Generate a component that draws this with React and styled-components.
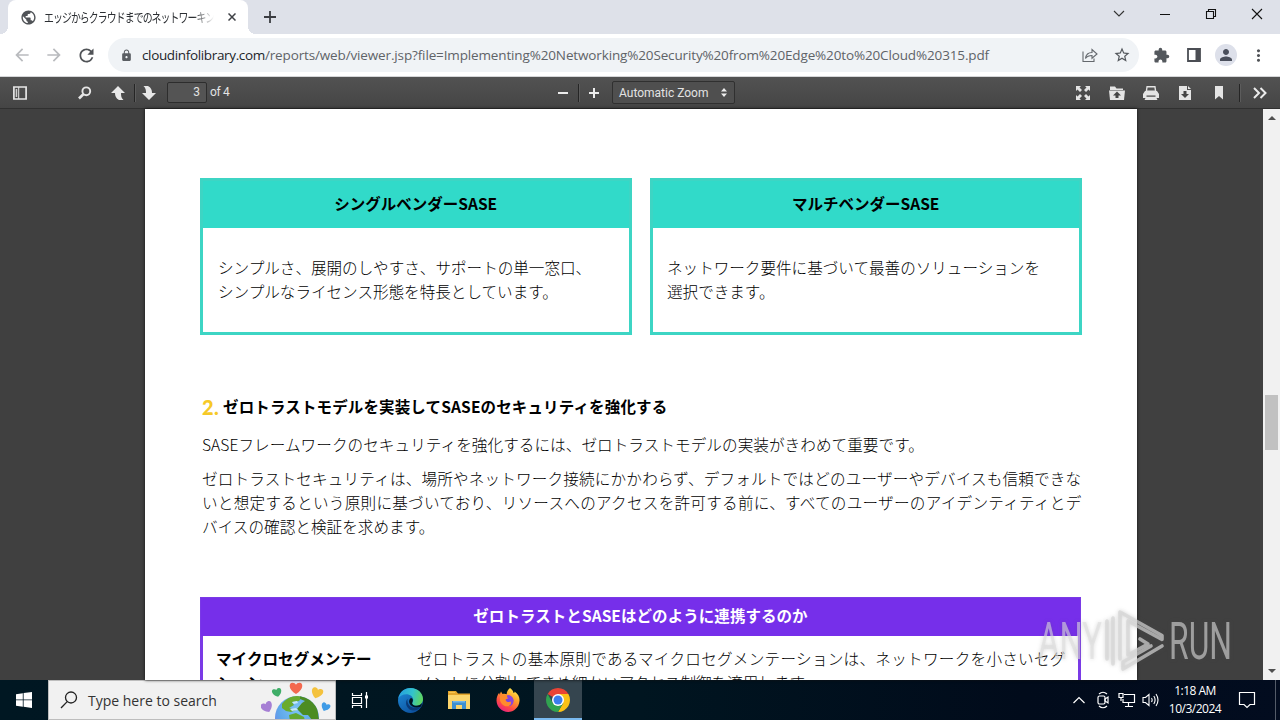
import styled, { createGlobalStyle } from "styled-components";
import {
  MdArrowBack,
  MdArrowForward,
  MdExtension,
  MdLock,
  MdMoreVert,
  MdPerson,
  MdPublic,
  MdRefresh,
  MdStarBorder,
} from "react-icons/md";

const GlobalStyle = createGlobalStyle`
  * {
    box-sizing: border-box;
  }

  body {
    margin: 0;
    overflow: hidden;
    font-family: "Open Sans", "Noto Sans CJK JP", sans-serif;
  }

  svg {
    display: block;
    flex: none;
  }
`;

const cards = [
  {
    title: "シングルベンダーSASE",
    inset: 15,
    lines: [
      "シンプルさ、展開のしやすさ、サポートの単一窓口、",
      "シンプルなライセンス形態を特長としています。",
    ],
  },
  {
    title: "マルチベンダーSASE",
    inset: 14,
    lines: ["ネットワーク要件に基づいて最善のソリューションを", "選択できます。"],
  },
];

const paragraph = [
  {
    text: "ゼロトラストセキュリティは、場所やネットワーク接続にかかわらず、デフォルトではどのユーザーやデバイスも信頼できな",
    track: 0.17,
  },
  {
    text: "いと想定するという原則に基づいており、リソースへのアクセスを許可する前に、すべてのユーザーのアイデンティティとデ",
    track: 0.26,
  },
  { text: "バイスの確認と検証を求めます。", track: 0.03 },
];

const App = () => {
  return (
    <Screen>
      <GlobalStyle />
      <TabStrip>
        <Tab>
          <MdPublic size={17} color="#505357" />
          <TabTitle>
            <span>エッジからクラウドまでのネットワーキン</span>
          </TabTitle>
          <CloseIcon />
        </Tab>
        <NewTab>
          <svg width="12" height="12" viewBox="0 0 12 12">
            <path d="M6 0v12M0 6h12" stroke="#3b3d42" strokeWidth="1.8" />
          </svg>
        </NewTab>
        <WindowControls>
          <svg width="12" height="12" viewBox="0 0 12 12">
            <path d="M1 3l5 5 5-5" fill="none" stroke="#333" strokeWidth="1.1" />
          </svg>
          <svg width="12" height="12" viewBox="0 0 12 12">
            <path d="M1 6.5h10" stroke="#111" />
          </svg>
          <svg width="12" height="12" viewBox="0 0 12 12">
            <path
              d="M1.5 3.5h7v7h-7zM3.5 3.5v-2h7v7h-2"
              fill="none"
              stroke="#111"
              strokeWidth="1.1"
            />
          </svg>
          <svg width="12" height="12" viewBox="0 0 12 12">
            <path d="M1 1l10 10M11 1L1 11" stroke="#111" strokeWidth="1.1" />
          </svg>
        </WindowControls>
      </TabStrip>

      <AddressBar>
        <NavButtons>
          <MdArrowBack size={20} color="#b9bbbe" />
          <MdArrowForward size={20} color="#b9bbbe" />
          <MdRefresh size={21} color="#505357" />
        </NavButtons>
        <Omnibox>
          <MdLock size={13} color="#5a5e63" />
          <Url>
            <Domain>cloudinfolibrary.com</Domain>
            <Path>
              /reports/web/viewer.jsp?file=Implementing%20Networking%20Security%20from%20Edge%20to%20Cloud%20315.pdf
            </Path>
          </Url>
          <OmniboxActions>
            <ShareIcon />
            <MdStarBorder size={18} color="#54585d" />
          </OmniboxActions>
        </Omnibox>
        <ProfileActions>
          <MdExtension size={17} color="#54585d" />
          <svg width="14" height="14" viewBox="0 0 14 14">
            <path d="M1 1h12v12H1z" fill="none" stroke="#4b4e54" strokeWidth="1.8" />
            <path d="M8.5 1H13v12H8.5z" fill="#4b4e54" />
          </svg>
          <Avatar>
            <MdPerson size={18} color="#4a4f5c" />
          </Avatar>
          <MdMoreVert size={19} color="#505357" />
        </ProfileActions>
      </AddressBar>

      <PdfToolbar>
        <ToolGroup>
          <SidebarIcon />
          <FindGap />
          <FindIcon />
          <PageArrow $gap={17} />
          <Divider $gap={8} />
          <PageArrow $down $gap={6} />
          <PageInput>3</PageInput>
          <PageCount>of 4</PageCount>
        </ToolGroup>
        <ToolGroup>
          <svg width="16" height="16" viewBox="0 0 16 16">
            <path d="M3 8h10" stroke="#ececec" strokeWidth="2" />
          </svg>
          <Divider $gap={7} />
          <ZoomInIcon />
          <ZoomSelect>
            <span>Automatic Zoom</span>
            <svg width="6" height="9" viewBox="0 0 6 9">
              <path d="M0 3.4L3 0l3 3.4zM0 5.6h6L3 9z" fill="#eee" />
            </svg>
          </ZoomSelect>
        </ToolGroup>
        <DocumentTools>
          <FullscreenIcon />
          <OpenIcon />
          <PrintIcon />
          <DownloadIcon />
          <BookmarkIcon />
          <Divider $gap={4} />
          <MoreIcon />
        </DocumentTools>
      </PdfToolbar>

      <Viewer>
        <Page>
          <CardRow>
            {cards.map((card) => (
              <Card key={card.title}>
                <CardTitle>{card.title}</CardTitle>
                <CardBody $inset={card.inset}>
                  {card.lines.map((line) => (
                    <Line key={line} $track={-0.02}>
                      {line}
                    </Line>
                  ))}
                </CardBody>
              </Card>
            ))}
          </CardRow>
          <Heading>
            <HeadingNumber>2.</HeadingNumber>
            <HeadingText>ゼロトラストモデルを実装してSASEのセキュリティを強化する</HeadingText>
          </Heading>
          <Prose>
            <Line $track={0.06}>
              SASEフレームワークのセキュリティを強化するには、ゼロトラストモデルの実装がきわめて重要です。
            </Line>
          </Prose>
          <Prose $gap={10}>
            {paragraph.map((line) => (
              <Line key={line.text} $track={line.track}>
                {line.text}
              </Line>
            ))}
          </Prose>
          <Table>
            <TableTitle>ゼロトラストとSASEはどのように連携するのか</TableTitle>
            <TableRow>
              <TableTerm>
                マイクロセグメンテー
                <br />
                ション
              </TableTerm>
              <div>
                <Line $track={0.27}>
                  ゼロトラストの基本原則であるマイクロセグメンテーションは、ネットワークを小さいセグ
                </Line>
                <Line>メントに分割してきめ細かいアクセス制御を適用します。</Line>
              </div>
            </TableRow>
          </Table>
        </Page>
        <Scrollbar>
          <ScrollArrow $up />
          <ScrollThumb />
          <ScrollArrow />
        </Scrollbar>
        <Watermark />
      </Viewer>

      <Taskbar>
        <StartButton>
          <svg width="16" height="16" viewBox="0 0 16 16">
            <path
              d="M0 2.2L6.8 1.2v6.3H0zM7.6 1.1L16 0v7.5H7.6zM0 8.3h6.8v6.4L0 13.8zM7.6 8.3H16V16l-8.4-1.2z"
              fill="#fff"
            />
          </svg>
        </StartButton>
        <SearchBox>
          <svg width="18" height="18" viewBox="0 0 18 18">
            <circle cx="11" cy="6.5" r="5.5" fill="none" stroke="#222" strokeWidth="1.3" />
            <path d="M7.2 10.6L1 17" stroke="#222" strokeWidth="1.3" />
          </svg>
          <SearchText>Type here to search</SearchText>
          <EarthArt />
        </SearchBox>
        <TaskButton>
          <TaskViewIcon />
        </TaskButton>
        <TaskButton $gap={2}>
          <EdgeIcon />
        </TaskButton>
        <TaskButton $gap={1}>
          <FolderIcon />
        </TaskButton>
        <TaskButton $gap={1}>
          <FirefoxIcon />
        </TaskButton>
        <TaskButton $active $gap={2}>
          <ChromeIcon />
        </TaskButton>
        <Tray>
          <TrayIcon>
            <svg width="14" height="14" viewBox="0 0 14 14">
              <path d="M1.5 10L7 4.5l5.5 5.5" fill="none" stroke="#fff" strokeWidth="1.2" />
            </svg>
          </TrayIcon>
          <TrayIcon>
            <MeetIcon />
          </TrayIcon>
          <TrayIcon>
            <NetworkIcon />
          </TrayIcon>
          <TrayIcon>
            <VolumeIcon />
          </TrayIcon>
          <Clock>
            <span>1:18 AM</span>
            <span>10/3/2024</span>
          </Clock>
          <svg width="18" height="18" viewBox="0 0 18 18">
            <path
              d="M1.5 1.5h15v12H12l-3 3-3-3H1.5z"
              fill="none"
              stroke="#fff"
              strokeWidth="1.2"
            />
          </svg>
          <ShowDesktop />
        </Tray>
      </Taskbar>
    </Screen>
  );
};

export default App;

const CloseIcon = () => (
  <svg width="8" height="8" viewBox="0 0 8 8">
    <path d="M.5.5l7 7M7.5.5l-7 7" stroke="#3f4146" strokeWidth="1.5" />
  </svg>
);

const ShareIcon = () => (
  <svg width="16" height="15" viewBox="0 0 16 15" fill="none" stroke="#64686d" strokeWidth="1.1">
    <path d="M1 3.5v10h11v-3" />
    <path d="M3.5 10.5C4 6.5 6.5 4.5 10 4.5v-3L15 6l-5 4.2V7.5c-3 0-5 .8-6.5 3z" />
  </svg>
);

const SidebarIcon = () => (
  <svg width="16" height="16" viewBox="0 0 16 16">
    <path d="M1.9 2h12.2v12H1.9z" fill="none" stroke="#e6e6e6" strokeWidth="1.7" />
    <path d="M3.7 4h1.5v8H3.7z" fill="#d0d0d0" />
    <path d="M6.7 2v12" stroke="#e6e6e6" />
  </svg>
);

const FindIcon = () => (
  <svg width="16" height="16" viewBox="0 0 16 16" fill="none" stroke="#e6e6e6">
    <circle cx="9.3" cy="6.3" r="3.9" strokeWidth="1.9" />
    <path d="M6.3 9.3L2 13.5" strokeWidth="2.6" />
  </svg>
);

const PageArrow = ({ $down, $gap }) => (
  <ArrowSvg width="16" height="16" viewBox="0 0 16 16" $gap={$gap}>
    <path
      d="M8 1l7 7h-4c0 3 .3 5 2.5 7H9c-3-1.5-4-4-4-7H1z"
      fill="#e8e8e8"
      transform={$down ? "rotate(180 8 8)" : undefined}
    />
  </ArrowSvg>
);

const ZoomInIcon = () => (
  <ArrowSvg width="16" height="16" viewBox="0 0 16 16" $gap={7}>
    <path d="M8 3v10M3 8h10" stroke="#ececec" strokeWidth="2" />
  </ArrowSvg>
);

const FullscreenIcon = () => (
  <svg width="16" height="16" viewBox="0 0 16 16" fill="#e4e4e4">
    <path d="M1 1h5L4.5 2.5 7 5 5 7 2.5 4.5 1 6zM15 1v5l-1.5-1.5L11 7 9 5l2.5-2.5L10 1zM1 15v-5l1.5 1.5L5 9l2 2-2.5 2.5L6 15zM15 15h-5l1.5-1.5L9 11l2-2 2.5 2.5L15 10z" />
  </svg>
);

const OpenIcon = () => (
  <svg width="16" height="16" viewBox="0 0 16 16">
    <path d="M1 1.5h5l1.5 2H14V5H1z" fill="#e4e4e4" />
    <path d="M0 5.5h16L15 15H1z" fill="#e4e4e4" />
    <path d="M8 6.5l4 4H9.5V13h-3v-2.5H4z" fill="#444" />
  </svg>
);

const PrintIcon = () => (
  <svg width="16" height="16" viewBox="0 0 16 16">
    <path d="M3.5 1h9l.8 5H2.7z" fill="#e4e4e4" />
    <path d="M4.6 2.5h6.8l.4 3H4.2z" fill="#555" />
    <path d="M2 6h12l2 3v4h-2.5l1 2H1.5l1-2H0V9z" fill="#e4e4e4" />
    <path d="M3.5 10.5h9v1.2h-9z" fill="#444" />
  </svg>
);

const DownloadIcon = () => (
  <svg width="16" height="16" viewBox="0 0 16 16">
    <path d="M2 1h8v4h4v10H2z" fill="#e4e4e4" />
    <path d="M11 1l3 3h-3z" fill="#e4e4e4" />
    <path d="M6.5 6h3v3H12l-4 4-4-4h2.5z" fill="#444" />
  </svg>
);

const BookmarkIcon = () => (
  <svg width="16" height="16" viewBox="0 0 16 16">
    <path d="M4 1h8v13.5L8 11l-4 3.5z" fill="#e4e4e4" />
  </svg>
);

const MoreIcon = () => (
  <ArrowSvg width="16" height="16" viewBox="0 0 16 16" $gap={12}>
    <path
      d="M2 3l5 5-5 5M8.5 3l5 5-5 5"
      fill="none"
      stroke="#ececec"
      strokeWidth="2"
    />
  </ArrowSvg>
);

const EarthArt = () => (
  <svg width="74" height="38" viewBox="0 0 74 38">
    <defs>
      <radialGradient id="ocean" cx="0.5" cy="0.3" r="0.75">
        <stop offset="0" stopColor="#7cc4f2" />
        <stop offset="0.55" stopColor="#5fa8ea" />
        <stop offset="1" stopColor="#7a74e6" />
      </radialGradient>
      <clipPath id="globe">
        <circle cx="36" cy="37" r="22" />
      </clipPath>
    </defs>
    <circle cx="36" cy="37" r="22" fill="url(#ocean)" />
    <g clipPath="url(#globe)">
      <path d="M21 23c4-5 9-8 15-9l5 2-3 4-7 1 2 3-5 3 7 2-5 2-5-1-4-3z" fill="#6aab2e" />
      <path d="M39 15l9 2 8 8 2 14h-7l-4-5-5 0-6-6 5-6 3-2-5-2z" fill="#4c8c23" />
      <path d="M28 34l7-2 8 4 1 4H29z" fill="#63a830" />
      <path d="M31 21l5-1 1 2-4 1zM29 28l6-1 2 2-6 1z" fill="#c5e9f8" />
    </g>
    <Heart x={35} y={7} size={12} color="#f3694f" />
    <Heart x={16} y={11.5} size={9} color="#3fae68" turn={-14} />
    <Heart x={56} y={12} size={11} color="#f4c23d" turn={18} />
    <Heart x={6} y={26} size={11} color="#a67fd4" turn={-24} />
    <Heart x={64.5} y={26} size={8.5} color="#3f9be6" turn={24} />
  </svg>
);

const Heart = ({ x, y, size, color, turn = 0 }) => (
  <path
    d="M0 4.5C-6 1-5.500-4-2.700-4-1.300-4-.4-3.500 0-2.500.4-3.500 1.300-4 2.700-4 5.500-4 6 1 0 4.500z"
    fill={color}
    transform={`translate(${x} ${y}) rotate(${turn}) scale(${size / 9})`}
  />
);

const TaskViewIcon = () => (
  <svg width="18" height="18" viewBox="0 0 18 18" fill="none" stroke="#fff" strokeWidth="1.2">
    <path d="M1.5 2v2.5h9V2M1.5 6.5h9v6h-9zM1.5 17v-2.5h9V17M15.5 1v16" />
    <path d="M14 4.5h3v3h-3z" fill="#fff" stroke="none" />
  </svg>
);

const EdgeIcon = () => (
  <svg width="25" height="25" viewBox="0 0 24 24">
    <defs>
      <linearGradient id="edgeTop" x1="0" y1="0.3" x2="1" y2="0.5">
        <stop offset="0" stopColor="#259fe0" />
        <stop offset="0.55" stopColor="#33c3cc" />
        <stop offset="1" stopColor="#5fd65c" />
      </linearGradient>
      <linearGradient id="edgeBase" x1="0" y1="0" x2="0.7" y2="1">
        <stop offset="0" stopColor="#1f8fdc" />
        <stop offset="1" stopColor="#0c4f9c" />
      </linearGradient>
    </defs>
    <circle cx="12" cy="12" r="12" fill="url(#edgeBase)" />
    <path
      d="M.3 10C1.5 4 6.2 0 12 0c7 0 12 5 12 10.500 0 4-3 6.500-6.500 6.500-3 0-4-1.400-4-2.300 0-.8 1.100-1.200 1.100-3.200C14.600 8.300 11.500 6 8 6 4.500 6 1.600 7.600.3 10z"
      fill="url(#edgeTop)"
    />
    <path
      d="M9.200 10.200C6.500 13 7.500 19.500 13 21.300c3.500 1 7-.5 9-3.300-2.500 1.500-6 1.600-8.500.5-3.300-1.400-5-4.700-4.300-8.300z"
      fill="#0a3a78"
    />
    <path
      d="M22.200 17.800c-4 2-9.800 1-11.300-3.300-.7-2 .2-4 1.600-4.800 1.800.3 2.300 2 1.400 3.700-1 1.900.6 3.600 3.600 3.600 2.500 0 4.500-1 5.600-2.500z"
      fill="#00141f"
    />
  </svg>
);

const FolderIcon = () => (
  <svg width="22" height="20" viewBox="0 0 22 20">
    <path d="M0 1h8l2 2.5h12V19H0z" fill="#e3a52c" />
    <path d="M0 5h22v14H0z" fill="#fbd56c" />
    <path d="M1 2h6v1H1z" fill="#f7c44e" />
    <path d="M4 19v-8h14v8h-4v-4H8v4z" fill="#3e8fd0" />
    <path d="M5 11h12v1.5H5z" fill="#71b5e8" />
  </svg>
);

const FirefoxIcon = () => (
  <svg width="24" height="24" viewBox="0 0 24 24">
    <defs>
      <linearGradient id="fox" x1="0.8" y1="0" x2="0.2" y2="1">
        <stop offset="0" stopColor="#fff14f" />
        <stop offset="0.35" stopColor="#ffa42b" />
        <stop offset="0.7" stopColor="#ff4a43" />
        <stop offset="1" stopColor="#e31b8b" />
      </linearGradient>
    </defs>
    <path
      d="M14 0c2.300 1.500 3.300 3.500 3.600 5.100.8-.1 1-.8 1-1.600C22.500 6 23.800 9.800 23.500 13 23 19.300 18 24 12 24S.6 19 .5 12.600C.5 9.300 1.600 6.700 3.200 4.800l.4 2L5 3.500 6.500 6c1.800-.6 3-.3 4.200.2C10.600 4 12 1.500 14 0z"
      fill="url(#fox)"
    />
    <circle cx="12.2" cy="12.8" r="5.300" fill="#7a42e0" />
    <path
      d="M4 8c2-1.500 5-1.600 7.500.2l1.600 1c-.5 1.500-2.600 1.300-3.500 2.600.3 2.500 4 3 5.800 1.200 1.200 2.300-1 5.300-4.400 5.300C7 18.300 4.500 15 4 12z"
      fill="#ff8b2c"
    />
    <path
      d="M11 7.500c3-.8 6 1.500 6.300 4.800.3 3-1.300 5-3.500 5.800 1.800-2.300 1.400-4.500.2-6C12.500 10.500 11 10.500 11 7.500z"
      fill="#8b45dc"
    />
  </svg>
);

const ChromeIcon = () => (
  <svg width="24" height="24" viewBox="0 0 24 24">
    <path d="M12 12L1.610 6A12 12 0 0 1 22.390 6z" fill="#ea4335" />
    <path d="M12 6h10.390A12 12 0 0 1 12 24l5.200-9z" fill="#fbc116" />
    <path d="M1.610 6A12 12 0 0 0 12 24l5.200-9H6.800z" fill="#31a350" />
    <circle cx="12" cy="12" r="6" fill="#fff" />
    <circle cx="12" cy="12" r="4.5" fill="#3b7ded" />
  </svg>
);

const MeetIcon = () => (
  <svg width="14" height="18" viewBox="0 0 14 18" fill="none" stroke="#fff" strokeWidth="1.2">
    <path d="M3 3Q7-.5 11 3M3 15q4 3.5 8 0" />
    <rect x="2" y="5" width="7" height="8" rx="1.5" />
    <path d="M9 8l3-2v6L9 10z" />
  </svg>
);

const NetworkIcon = () => (
  <svg width="18" height="16" viewBox="0 0 18 16" fill="none" stroke="#fff" strokeWidth="1.2">
    <path d="M6 2.5h10.5v8H5V7M10.5 10.5v4M7 14.5h8" />
    <path d="M1 1.5h4v4H1zM3 5.5V9" />
  </svg>
);

const VolumeIcon = () => (
  <svg width="18" height="16" viewBox="0 0 18 16" fill="none" stroke="#fff" strokeWidth="1.1">
    <path d="M1 5.5h2.5L7 2.5v11l-3.500-3H1zM9.500 6q1.300 2 0 4M11.800 4q2.600 4 0 8M14 2q4 6 0 12" />
  </svg>
);

const Watermark = () => (
  <WatermarkSvg width="210" height="70" viewBox="0 0 210 70">
    <g fill="#dcdcdc" fillOpacity="0.6" fontFamily="Roboto, sans-serif" fontSize="52">
      <text x="7" y="50" textLength="64" lengthAdjust="spacingAndGlyphs">
        ANY
      </text>
      <text x="138" y="50" textLength="63" lengthAdjust="spacingAndGlyphs">
        RUN
      </text>
    </g>
    <g
      fill="none"
      stroke="#d4d4d4"
      strokeOpacity="0.7"
      strokeWidth="3.6"
      strokeLinecap="round"
      strokeLinejoin="round"
    >
      <path d="M76 50V12M82 55V9" />
      <path d="M89 50V3l42 23.5v4L97 12v34l20-11-8-5" />
      <path d="M131 37L92 60v-7l28-16" />
    </g>
  </WatermarkSvg>
);

const Screen = styled.div`
  width: 1280px;
  height: 720px;
  display: flex;
  flex-direction: column;
  overflow: hidden;
  background: #fff;
`;

const TabStrip = styled.header`
  height: 34px;
  display: flex;
  align-items: flex-end;
  padding-left: 8px;
  background: #dee1e9;
`;

const Tab = styled.div`
  position: relative;
  width: 240px;
  height: 34px;
  padding: 0 12px;
  display: flex;
  align-items: center;
  border-radius: 8px 8px 0 0;
  background: #fff;

  &::before,
  &::after {
    content: "";
    position: absolute;
    bottom: 0;
    width: 8px;
    height: 8px;
  }

  &::before {
    left: -8px;
    background: radial-gradient(circle at 0 0, transparent 8px, #fff 8px);
  }

  &::after {
    right: -8px;
    background: radial-gradient(circle at 100% 0, transparent 8px, #fff 8px);
  }
`;

const TabTitle = styled.span`
  flex: 1;
  margin: -2px 14px 0 7px;
  white-space: nowrap;
  color: #2c2f33;
  font-family: "Noto Sans CJK JP", sans-serif;
  font-size: 13px;
  mask-image: linear-gradient(90deg, #000 88%, transparent);

  span {
    display: inline-block;
    width: 0;
    letter-spacing: -1.2px;
    transform: scaleX(0.76);
    transform-origin: 0 50%;
  }
`;

const NewTab = styled.div`
  height: 34px;
  margin-left: 16px;
  display: flex;
  align-items: center;
`;

const WindowControls = styled.div`
  height: 28px;
  margin: 0 17px 6px auto;
  display: flex;
  align-items: center;
  gap: 34px;
`;

const AddressBar = styled.div`
  height: 43px;
  display: flex;
  align-items: center;
  border-bottom: 1px solid #d5d6d8;
  background: #fff;
`;

const NavButtons = styled.div`
  width: 108px;
  padding-left: 12px;
  display: flex;
  align-items: center;
  gap: 12px;
`;

const Omnibox = styled.div`
  width: 1031px;
  height: 34px;
  padding: 0 8px 0 12px;
  display: flex;
  align-items: center;
  border-radius: 17px;
  background: #f0f3f6;
`;

const Url = styled.div`
  margin-left: 9px;
  display: flex;
  font-size: 13.5px;
  white-space: nowrap;
`;

const Domain = styled.span`
  color: #222529;
  letter-spacing: -0.35px;
`;

const Path = styled.span`
  color: #5f6368;
  letter-spacing: -0.14px;
`;

const OmniboxActions = styled.div`
  margin-left: auto;
  display: flex;
  align-items: center;
  gap: 15px;
`;

const ProfileActions = styled.div`
  flex: 1;
  padding-left: 14px;
  display: flex;
  align-items: center;

  > :nth-child(2) {
    margin-left: 17px;
  }

  > :nth-child(3) {
    margin-left: 14px;
  }

  > :last-child {
    margin-left: 12px;
  }
`;

const Avatar = styled.div`
  width: 22px;
  height: 22px;
  display: grid;
  place-items: center;
  border-radius: 50%;
  background: #dde0ea;
`;

const PdfToolbar = styled.div`
  height: 32px;
  display: grid;
  grid-template-columns: 555px 1fr auto;
  background: linear-gradient(#525252, #454545);
  border-bottom: 1px solid #303030;
  color: #e3e3e3;
  font-family: Roboto, sans-serif;
  font-size: 12px;
`;

const ToolGroup = styled.div`
  display: flex;
  align-items: center;

  &:first-child {
    padding-left: 12px;
  }
`;

const FindGap = styled.span`
  width: 49px;
`;

const ArrowSvg = styled.svg`
  margin-left: ${({ $gap }) => $gap}px;
`;

const Divider = styled.span`
  width: 1px;
  height: 18px;
  margin-left: ${({ $gap }) => $gap}px;
  background: #252525;
  box-shadow: 1px 0 0 #5c5c5c;
`;

const PageInput = styled.div`
  width: 40px;
  height: 21px;
  margin-left: 10px;
  padding-right: 6px;
  line-height: 19px;
  text-align: right;
  border: 1px solid #2d2d2d;
  border-radius: 2px;
  background: #545454;
`;

const PageCount = styled.span`
  margin-left: 3px;
  line-height: 19px;
  letter-spacing: -0.3px;
`;

const ZoomSelect = styled.div`
  width: 123px;
  height: 23px;
  margin-left: 10px;
  padding: 0 7px 0 6px;
  display: flex;
  align-items: center;
  justify-content: space-between;
  border: 1px solid #303030;
  border-radius: 2px;
  background: #4f4f4f;
`;

const DocumentTools = styled(ToolGroup)`
  padding-right: 12px;

  > svg + svg {
    margin-left: 18px;
  }

  > span {
    margin-left: 12px;
  }
`;

const Viewer = styled.main`
  position: relative;
  height: 571px;
  display: flex;
  background: #404040;
`;

const Page = styled.article`
  width: 992px;
  margin-left: 145px;
  padding: 69px 55px 0;
  overflow: hidden;
  background: #fff;
  box-shadow: 0 0 3px #111;
  font-family: "Noto Sans CJK JP", sans-serif;
  color: #000;
`;

const CardRow = styled.div`
  display: flex;
  gap: 18.5px;
`;

const Card = styled.section`
  width: 431.5px;
  height: 157px;
  border: 3px solid #3dd5c4;
  flex: none;
`;

const CardTitle = styled.h3`
  height: 47px;
  margin: 0;
  background: #31dac9;
  font-size: 15.5px;
  line-height: 44px;
  text-align: center;
`;

const CardBody = styled.div`
  padding: 27px ${({ $inset }) => $inset}px;
`;

const Line = styled.p`
  margin: 0;
  white-space: nowrap;
  font-size: 15.6px;
  font-weight: 300;
  line-height: 24px;
  letter-spacing: ${({ $track = 0 }) => $track}px;
`;

const Heading = styled.div`
  height: 24px;
  margin-top: 59px;
  padding-left: 2px;
  display: flex;
  align-items: center;
`;

const HeadingNumber = styled.span`
  width: 21px;
  color: #f6c927;
  font-family: Lato, sans-serif;
  font-size: 20px;
  font-weight: 900;
  line-height: 28px;
  letter-spacing: 0.5px;
  padding-top: 2px;
`;

const HeadingText = styled.h2`
  margin: 0;
  font-size: 15.5px;
  line-height: 24px;
  letter-spacing: 0.14px;
  white-space: nowrap;
`;

const Prose = styled.div`
  margin-top: ${({ $gap = 14 }) => $gap}px;
  padding-left: 2px;
`;

const Table = styled.section`
  width: 881px;
  height: 200px;
  margin-top: 59px;
  border: solid #7a3ae6;
  border-width: 1px 3px;
`;

const TableTitle = styled.h3`
  height: 38px;
  margin: 0 -2px;
  background: #762fea;
  color: #fff;
  font-size: 15.5px;
  line-height: 35px;
  letter-spacing: 0.06px;
  text-align: center;
`;

const TableRow = styled.div`
  padding: 10px 13px;
  display: grid;
  grid-template-columns: 201px 1fr;
`;

const TableTerm = styled.div`
  font-size: 15.6px;
  font-weight: 700;
  line-height: 24px;
`;

const Scrollbar = styled.div`
  width: 17px;
  margin-left: auto;
  display: flex;
  flex-direction: column;
  align-items: center;
  background: #f1f1f1;
`;

const ScrollThumb = styled.div`
  width: 13px;
  height: 55px;
  margin: 275px 0 auto;
  background: #c1c1c1;
`;

const ScrollArrow = styled.div`
  width: 0;
  height: 0;
  margin: ${({ $up }) => ($up ? "7px 0 0" : "0 0 7px")};
  border: 4px solid transparent;
  border-top: ${({ $up }) => ($up ? "0" : "4px solid #505050")};
  border-bottom: ${({ $up }) => ($up ? "4px solid #505050" : "0")};
`;

const WatermarkSvg = styled.svg`
  position: absolute;
  left: 1031px;
  top: 500px;
  filter: drop-shadow(0 0 2px rgba(80, 80, 80, 0.35));
`;

const Taskbar = styled.footer`
  height: 40px;
  display: flex;
  background: linear-gradient(90deg, #001722, #001520 50%, #010b1b 80%, #020c1f);
`;

const StartButton = styled.div`
  width: 48px;
  display: grid;
  place-items: center;
`;

const SearchBox = styled.div`
  width: 288px;
  padding-left: 11px;
  display: flex;
  align-items: center;
  overflow: hidden;
  border: 1px solid #bdbdbd;
  background: #f1f1f1;
`;

const SearchText = styled.span`
  flex: 1;
  margin-left: 10px;
  color: #333;
  font-size: 14px;
  white-space: nowrap;
`;

const TaskButton = styled.div`
  width: 48px;
  height: 40px;
  margin-left: ${({ $gap = 0 }) => $gap}px;
  display: grid;
  place-items: center;
  background: ${({ $active }) => ($active ? "#35454f" : "transparent")};
  box-shadow: ${({ $active }) => ($active ? "inset 0 -2px #7abaf0" : "none")};

  &:last-of-type {
    margin-left: 0;
  }
`;

const Tray = styled.div`
  margin-left: auto;
  display: flex;
  align-items: center;
`;

const TrayIcon = styled.div`
  width: 24px;
  display: grid;
  place-items: center;
`;

const Clock = styled.div`
  width: 64px;
  margin-right: 11px;
  display: flex;
  flex-direction: column;
  align-items: center;
  color: #fff;
  font-size: 12px;
  line-height: 18px;
  letter-spacing: -0.5px;
`;

const ShowDesktop = styled.div`
  width: 5px;
  height: 40px;
  margin-left: 19px;
  border-left: 1px solid #535b68;
`;
